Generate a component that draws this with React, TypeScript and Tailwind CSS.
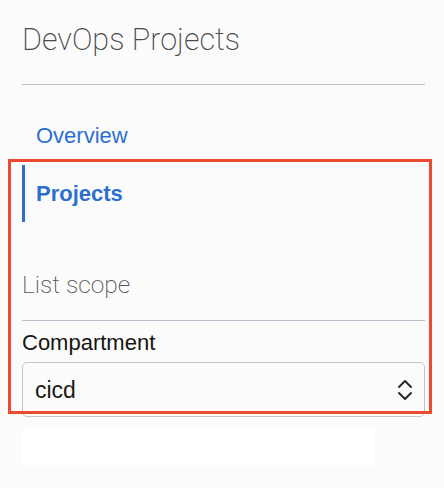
import React from "react";

function UpDown() {
  return (
    <svg width="16" height="24" viewBox="0 0 16 24" fill="none" stroke="#2a2a2a" strokeWidth="2" strokeLinecap="round" strokeLinejoin="round">
      <path d="M2 9 L8 3 L14 9" />
      <path d="M2 15 L8 21 L14 15" />
    </svg>
  );
}

export default function App() {
  return (
    <div className="relative w-[444px] h-[488px] bg-[#fbfbfb] overflow-hidden" style={{ fontFamily: '"Liberation Sans", Arial, sans-serif' }}>
      <div className="flex flex-col pl-[22px] pr-[19px]">
        <h1 className="pt-[22px] text-[30.5px] leading-[36px] font-extralight text-[#4a4a4a] font-['Roboto',sans-serif]">DevOps Projects</h1>
        <div className="mt-[26px] h-px bg-[#b7bcc8]" />
        <nav className="flex flex-col">
          <a className="mt-[37px] pl-[14px] text-[22px] leading-[28px] text-[#2c6fce]">Overview</a>
          <a className="mt-[15px] h-[57px] flex items-center border-l-[3px] border-[#2c6fce] pl-[11px] text-[22px] leading-[28px] font-bold text-[#2c6fce]">Projects</a>
        </nav>
        <div className="mt-[48px] text-[24.5px] leading-[30px] font-extralight text-[#555555] font-['Roboto',sans-serif]">List scope</div>
        <div className="mt-[20px] h-px bg-[#b7bcc8]" />
        <label className="mt-[8px] text-[22px] leading-[28px] text-[#161513]">Compartment</label>
        <div className="mt-[5px] h-[55px] rounded-[5px] border border-[#c3c5cc] bg-[#fbfbfb] flex items-center justify-between pl-[12px] pr-[11px]">
          <span className="text-[23px] leading-[28px] text-[#1a1a1a]">cicd</span>
          <UpDown />
        </div>
        <div className="mt-[12px] -ml-px w-[354px] h-[37px] bg-white" />
      </div>
      <div className="absolute left-[8px] top-[159px] w-[424px] h-[255px] border-[3px] border-[#eb4a2f]" />
    </div>
  );
}
